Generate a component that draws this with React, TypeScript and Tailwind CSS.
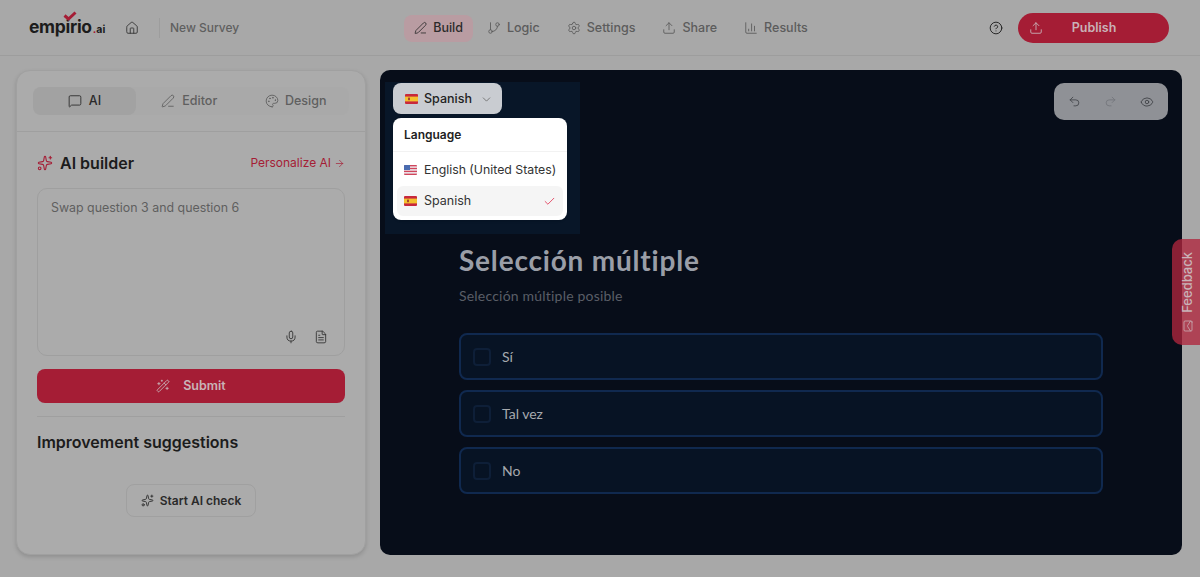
import { House, MessageSquare, PenLine, Palette, GitBranch, Settings, Upload, ChartColumn, CircleHelp, Undo2, Redo2, Eye, Mic, FileText, WandSparkles, Sparkles, Check, ChevronDown, Mail, ArrowRight } from "lucide-react";

const font = "font-['Inter','Noto_Sans',sans-serif]";

function SpainFlag() {
  return (
    <svg width="13" height="10" viewBox="0 0 13 10" className="shrink-0 rounded-[1px]">
      <rect width="13" height="10" fill="#c8283c" />
      <rect y="2.6" width="13" height="4.8" fill="#f3c12e" />
      <rect x="3" y="3.6" width="2" height="2.6" fill="#a8452d" />
    </svg>
  );
}

function UsFlag() {
  return (
    <svg width="13" height="10" viewBox="0 0 13 10" className="shrink-0 rounded-[1px]">
      <rect width="13" height="10" fill="#eef0f4" />
      <rect y="0" width="13" height="1.4" fill="#d0465c" />
      <rect y="2.8" width="13" height="1.4" fill="#d0465c" />
      <rect y="5.7" width="13" height="1.4" fill="#d0465c" />
      <rect y="8.6" width="13" height="1.4" fill="#d0465c" />
      <rect width="6" height="5" fill="#4a6cb0" />
    </svg>
  );
}

function NavItem({ icon: Icon, label }: { icon: typeof House; label: string }) {
  return (
    <div className="flex h-[27px] items-center gap-[6px] px-[13px] text-[12.5px] font-medium text-[#5c5c5c]">
      <Icon size={14} strokeWidth={1.5} />
      <span>{label}</span>
    </div>
  );
}

function Option({ label }: { label: string }) {
  return (
    <div className="flex h-[47px] items-center gap-[11px] rounded-[8px] border-2 border-[#10294f] bg-[#071324] pl-[12px]">
      <div className="h-[18px] w-[18px] rounded-[4px] border-2 border-[#0e1f38]" />
      <span className="text-[14px] text-[#a6a9ae]">{label}</span>
    </div>
  );
}

export default function App() {
  return (
    <div className={`${font} relative flex h-[577px] w-[1200px] flex-col overflow-hidden bg-[#a8a8a8]`}>
      {/* Header */}
      <header className="flex h-[56px] shrink-0 items-center border-b border-[#9d9d9d] pl-[29px] pr-[31px] pt-[1px]">
        <div className="flex w-[375px] items-center">
          <div className="relative -mt-[2px] flex w-[76px] items-baseline text-[#1c1c1c]">
            <svg width="14" height="10" viewBox="0 0 14 10" className="absolute left-[34px] top-[-6px]">
              <path d="M1.5 4.5 L5.5 8 L12.5 1.5" fill="none" stroke="#a51d35" strokeWidth="3" />
            </svg>
            <span className="text-[17.5px] font-bold leading-[20px] tracking-[-0.3px]">empirio</span>
            <span className="ml-[1px] text-[10.5px] font-bold"><span className="text-[#a51d35]">.</span>ai</span>
          </div>
          <House size={14} strokeWidth={1.5} className="ml-[20px] text-[#333]" />
          <div className="ml-[20px] h-[20px] w-px bg-[#9d9d9d]" />
          <span className="ml-[10px] text-[12px] font-medium text-[#5f5f5f]">New Survey</span>
        </div>
        <nav className="flex items-center gap-[1px]">
          <div className="flex h-[27px] w-[69px] items-center gap-[6px] rounded-[8px] bg-[#b99ca2] px-[10px] text-[12.5px] font-medium text-[#2a2a2a]">
            <PenLine size={14} strokeWidth={1.5} />
            <span>Build</span>
          </div>
          <NavItem icon={GitBranch} label="Logic" />
          <NavItem icon={Settings} label="Settings" />
          <NavItem icon={Upload} label="Share" />
          <NavItem icon={ChartColumn} label="Results" />
        </nav>
        <div className="ml-auto flex items-center gap-[15px]">
          <CircleHelp size={14} strokeWidth={1.6} className="text-[#1f1f1f]" />
          <button className="flex h-[30px] w-[151px] items-center rounded-full bg-[#a51d35] pl-[11px] text-[12.5px] font-semibold text-[#c9b3b8]">
            <Upload size={14} strokeWidth={1.5} />
            <span className="flex-1 pr-[24px] text-center">Publish</span>
          </button>
        </div>
      </header>

      {/* Body */}
      <div className="flex flex-1 gap-[14px] pb-[22px] pl-[16px] pr-[18px] pt-[14px]">
        {/* Left panel */}
        <aside className="flex w-[350px] shrink-0 flex-col rounded-[14px] border border-[#a0a0a0] bg-[#ababab] shadow-[0_2px_4px_rgba(0,0,0,0.15)]">
          <div className="flex h-[61px] items-center border-b border-[#9f9f9f] px-[16px]">
            <div className="flex h-[28px] w-full rounded-[8px] bg-[#a9a9a9] text-[12.5px] font-medium text-[#5f5f5f]">
              <div className="flex w-[103px] items-center justify-center gap-[7px] rounded-[8px] bg-[#a2a2a2] text-[#2a2a2a]">
                <MessageSquare size={14} strokeWidth={1.5} />
                <span>AI</span>
              </div>
              <div className="flex flex-1 items-center justify-center gap-[7px]">
                <PenLine size={14} strokeWidth={1.5} />
                <span>Editor</span>
              </div>
              <div className="flex flex-1 items-center justify-center gap-[6px]">
                <Palette size={14} strokeWidth={1.5} />
                <span>Design</span>
              </div>
            </div>
          </div>
          <div className="flex flex-1 flex-col px-[20px]">
            <div className="mt-[20px] flex h-[22px] items-center">
              <Sparkles size={16} strokeWidth={1.6} className="text-[#a51d35]" />
              <span className="ml-[7px] text-[16px] font-semibold text-[#1c1c1c]">AI builder</span>
              <span className="ml-auto flex items-center gap-[3px] text-[12px] text-[#a51d35]">
                Personalize AI
                <ArrowRight size={11} strokeWidth={1.5} />
              </span>
            </div>
            <div className="mt-[14px] flex h-[168px] flex-col rounded-[10px] border border-[#9f9f9f] px-[13px] pb-[11px] pt-[10px]">
              <span className="text-[12.4px] text-[#5f5f5f]">Swap question 3 and question 6</span>
              <div className="mt-auto flex justify-end gap-[16px] pr-[3px] text-[#333]">
                <Mic size={14} strokeWidth={1.5} />
                <FileText size={14} strokeWidth={1.5} />
              </div>
            </div>
            <button className="mt-[13px] flex h-[34px] w-full items-center justify-center gap-[13px] rounded-[8px] bg-[#a51d35] text-[12.5px] font-semibold text-[#c9b3b8]">
              <WandSparkles size={14} strokeWidth={1.5} />
              <span>Submit</span>
            </button>
            <div className="mt-[13px] h-px bg-[#9f9f9f]" />
            <h2 className="mt-[15px] text-[16px] font-semibold leading-[20px] text-[#1c1c1c]">Improvement suggestions</h2>
            <div className="mt-[32px] flex justify-center">
              <button className="flex h-[33px] w-[130px] items-center justify-center gap-[6px] rounded-[8px] border border-[#a0a0a0] text-[12px] font-semibold text-[#2a2a2a]">
                <Sparkles size={13} strokeWidth={1.6} />
                <span>Start AI check</span>
              </button>
            </div>
          </div>
        </aside>

        {/* Canvas */}
        <main className="relative flex-1 rounded-[10px] bg-[#070d19]">
          <div className="flex flex-col pl-[79px] pr-[79px] pt-[172px]">
            <h1 className="font-['Lato',sans-serif] text-[28px] font-bold leading-[36px] tracking-[0.8px] text-[#9a9ea7]">Selección múltiple</h1>
            <p className="mt-[8px] font-['Lato',sans-serif] text-[14px] leading-[20px] tracking-[0.2px] text-[#5a5e67]">Selección múltiple posible</p>
            <div className="mt-[27px] flex flex-col gap-[10px] font-['Lato',sans-serif]">
              <Option label="Sí" />
              <Option label="Tal vez" />
              <Option label="No" />
            </div>
          </div>

          <div className="absolute right-[14px] top-[13px] flex h-[37px] w-[114px] items-center justify-between rounded-[10px] bg-[#8f9196] px-[14px] text-[#3f4146]">
            <Undo2 size={13} strokeWidth={1.5} />
            <Redo2 size={13} strokeWidth={1.5} className="text-[#71747a]" />
            <Eye size={14} strokeWidth={1.5} />
          </div>

          <div className="absolute left-[5px] top-[12px] h-[152px] w-[195px] bg-[#081628]" />
          <button className="absolute left-[13px] top-[13px] flex h-[31px] w-[109px] items-center gap-[6px] rounded-[8px] bg-[#c9ccd1] pl-[12px] pt-[1px] text-[12.5px] font-medium text-[#222]">
            <SpainFlag />
            <span>Spanish</span>
            <ChevronDown size={13} strokeWidth={1.5} className="ml-[2px] text-[#666]" />
          </button>
          <div className="absolute left-[13px] top-[48px] w-[174px] rounded-[8px] bg-white px-[4px] pb-[4px] shadow-sm">
            <div className="-mx-[4px] flex h-[34px] items-center border-b border-[#f2f2f2] px-[11px] text-[12px] font-semibold text-[#222]">Language</div>
            <div className="flex h-[34px] items-center gap-[7px] whitespace-nowrap px-[7px] pt-[2px] text-[12.3px] text-[#333]">
              <UsFlag />
              <span>English (United States)</span>
            </div>
            <div className="flex h-[30px] items-center gap-[7px] rounded-[6px] bg-[#f5f5f5] px-[7px] text-[12.5px] text-[#333]">
              <SpainFlag />
              <span>Spanish</span>
              <Check size={13} strokeWidth={1.5} className="ml-auto text-[#e0304f]" />
            </div>
          </div>
        </main>
      </div>

      {/* Feedback tab */}
      <div className="absolute right-0 top-[239px] flex h-[106px] w-[28px] flex-col items-center justify-center gap-[7px] rounded-l-[10px] bg-[#b0273e]/[0.78] pl-[4px]">
        <span className="rotate-180 text-[13px] font-medium text-[#c9b3b8] [writing-mode:vertical-rl]">Feedback</span>
        <Mail size={12} strokeWidth={1.5} className="rotate-90 text-[#c9b3b8]" />
      </div>
    </div>
  );
}
